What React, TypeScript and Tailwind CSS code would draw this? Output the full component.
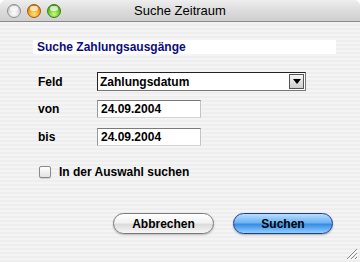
const font = "font-['Liberation_Sans',Arial,sans-serif]";

function Light({ tone }: { tone: "gray" | "orange" | "green" }) {
  const fill =
    tone === "gray"
      ? "bg-[radial-gradient(circle_at_50%_70%,#ffffff_0%,#d8d8d8_55%,#a8a8a8_100%)] border-[#8e8e8e]"
      : tone === "orange"
      ? "bg-[radial-gradient(circle_at_50%_75%,#ffe27a_0%,#f7a21c_50%,#b4600a_100%)] border-[#9a5a10]"
      : "bg-[radial-gradient(circle_at_50%_75%,#cdf78a_0%,#6ccc2a_50%,#2f7d0c_100%)] border-[#3b7a1a]";
  return (
    <div className={`relative h-[14px] w-[14px] rounded-full border ${fill}`}>
      <div className="absolute left-[2px] top-[1px] h-[5px] w-[8px] rounded-full bg-white/70" />
    </div>
  );
}

function TextBox({ value, className = "" }: { value: string; className?: string }) {
  return (
    <div
      className={`flex h-[18px] items-center border border-t-[#7a7a7a] border-l-[#9a9a9a] border-r-[#c4c4c4] border-b-[#d4d4d4] bg-white pl-[3px] text-[12px] font-bold text-black ${className}`}
    >
      {value}
    </div>
  );
}

export default function App() {
  return (
    <div className={`h-[262px] w-[360px] overflow-hidden bg-white ${font}`}>
      <div className="flex h-[262px] w-[360px] flex-col overflow-hidden rounded-t-[6px] bg-[repeating-linear-gradient(180deg,#eeeeee_0px,#eeeeee_2px,#f4f4f4_2px,#f4f4f4_4px)]">
        {/* title bar */}
        <div className="relative flex h-[22px] shrink-0 items-center border-b border-[#8a8a8a] bg-[linear-gradient(180deg,#eeeeee_0%,#dcdcdc_50%,#cfcfcf_100%)] pl-[7px]">
          <div className="flex gap-[6px]">
            <Light tone="gray" />
            <Light tone="orange" />
            <Light tone="green" />
          </div>
          <div className="absolute inset-0 flex items-center justify-center text-[13px] text-black">
            Suche Zeitraum
          </div>
        </div>

        <div className="flex flex-1 flex-col pl-[33px]">
          {/* heading */}
          <div className="mt-[18px] flex h-[14px] w-[303px] items-center bg-white pl-[4px] text-[12px] font-bold text-[#0d0d7c]">
            Suche Zahlungsausgänge
          </div>

          {/* fields */}
          <div className="mt-[18px] grid grid-cols-[59px_auto] items-center gap-y-[9px] pl-[5px] text-[12px] font-bold text-black">
            <span>Feld</span>
            <div className="flex h-[19px] w-[209px] items-center justify-between border border-t-[#222] border-l-[#222] border-r-[#777] border-b-[#777] bg-white pl-[2px] pr-[1px]">
              <span>Zahlungsdatum</span>
              <div className="flex h-[15px] w-[15px] items-center justify-center border border-[#555] bg-[linear-gradient(180deg,#f6f6f6,#cfcfcf)]">
                <svg width="8" height="5" viewBox="0 0 8 5">
                  <path d="M0 0h8L4 5z" fill="#000" />
                </svg>
              </div>
            </div>
            <span>von</span>
            <TextBox value="24.09.2004" className="w-[104px]" />
            <span className="mt-[1px]">bis</span>
            <TextBox value="24.09.2004" className="mt-[1px] w-[104px]" />
          </div>

          {/* checkbox */}
          <label className="mt-[17px] flex items-center gap-[8px] pl-[6px] text-[12px] font-bold text-black">
            <span className="h-[12px] w-[12px] rounded-[2px] border border-[#8a8a8a] bg-[linear-gradient(180deg,#ffffff,#e2e2e2)] shadow-[0_1px_1px_rgba(0,0,0,0.15)]" />
            In der Auswahl suchen
          </label>

          {/* buttons */}
          <div className="mt-[32px] flex gap-[19px] pl-[80px] text-[12px] font-bold text-black">
            <button className="h-[21px] w-[101px] rounded-full border border-[#7a7a7a] bg-[linear-gradient(180deg,#ffffff_0%,#f2f2f2_45%,#dcdcdc_55%,#f6f6f6_100%)] shadow-[0_1px_2px_rgba(0,0,0,0.25)]">
              Abbrechen
            </button>
            <button className="h-[21px] w-[100px] rounded-full border border-[#1c3c8c] bg-[linear-gradient(180deg,#b9dcff_0%,#6fb3f2_45%,#3a8ce6_55%,#8fd0ff_100%)] shadow-[0_1px_2px_rgba(0,0,0,0.3)]">
              Suchen
            </button>
          </div>

          {/* resize grip */}
          <div className="mt-auto flex justify-end pr-[2px] pb-[2px]">
            <svg width="12" height="12" viewBox="0 0 12 12">
              <path d="M11 1L1 11M11 5L5 11M11 9L9 11" stroke="#8a8a8a" strokeWidth="1" />
              <path d="M12 2L2 12M12 6L6 12" stroke="#ffffff" strokeWidth="1" />
            </svg>
          </div>
        </div>
      </div>
    </div>
  );
}
